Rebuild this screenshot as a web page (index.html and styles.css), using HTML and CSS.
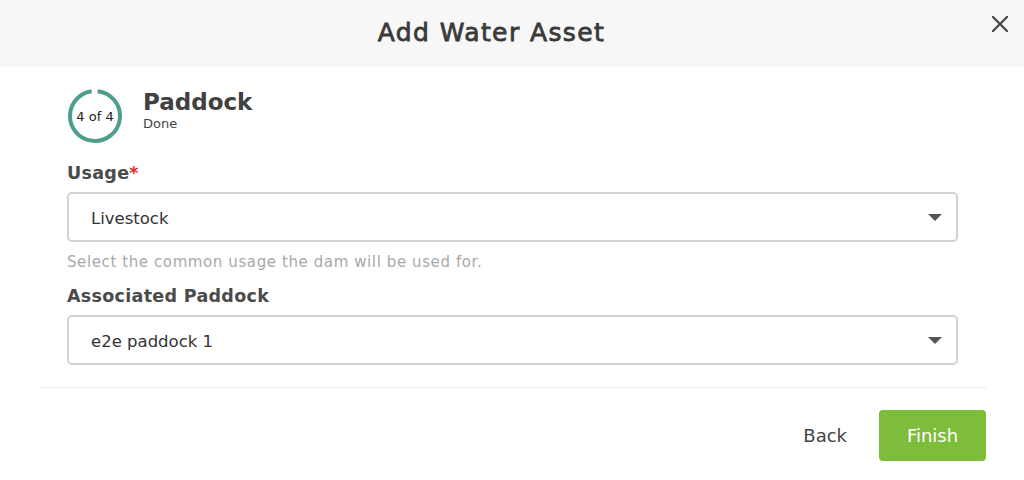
FILE: index.html
```html
<!DOCTYPE html>
<html lang="en">
<head>
    <meta charset="UTF-8">
    <title>Add Water Asset</title>
    <link rel="stylesheet" href="styles.css">
</head>
<body>
    <div class="modal">
        <div class="modal-header">
            <h1>Add Water Asset</h1>
            <button class="close-btn" aria-label="Close">
                <svg width="18" height="18" viewBox="0 0 18 18"><path d="M2 2 L16 16 M16 2 L2 16" stroke="#444" stroke-width="2.2" stroke-linecap="round"/></svg>
            </button>
        </div>

        <div class="modal-body">
            <div class="step">
                <div class="step-ring">
                    <svg width="56" height="56" viewBox="0 0 56 56">
                        <circle cx="28" cy="28" r="25" fill="none" stroke="#4e9d8d" stroke-width="4" stroke-dasharray="150 7.08" transform="rotate(-84 28 28)"/>
                    </svg>
                    <span>4 of 4</span>
                </div>
                <div class="step-text">
                    <div class="step-title">Paddock</div>
                    <div class="step-sub">Done</div>
                </div>
            </div>

            <label class="field-label">Usage<span class="req">*</span></label>
            <div class="select">
                <span>Livestock</span>
                <span class="caret"></span>
            </div>
            <div class="hint">Select the common usage the dam will be used for.</div>

            <label class="field-label">Associated Paddock</label>
            <div class="select">
                <span>e2e paddock 1</span>
                <span class="caret"></span>
            </div>
        </div>

        <div class="modal-footer">
            <button class="btn-back">Back</button>
            <button class="btn-finish">Finish</button>
        </div>
    </div>
</body>
</html>
```

FILE: styles.css
```css
* {
    margin: 0;
    padding: 0;
    box-sizing: border-box;
}

body {
    background: #fff;
    font-family: 'DejaVu Sans', 'Open Sans', sans-serif;
    color: #333;
    width: 1024px;
    height: 480px;
    overflow: hidden;
}

.modal-header {
    height: 67px;
    background: #f7f7f7;
    display: flex;
    align-items: center;
    justify-content: center;
    padding-right: 41px;
    position: relative;
}

.modal-header h1 {
    font-size: 25px;
    font-weight: normal;
    -webkit-text-stroke: 0.8px #3a3a3a;
    letter-spacing: 1.4px;
    color: #3a3a3a;
    margin-top: -2px;
}

.close-btn {
    position: absolute;
    right: 14px;
    top: 14px;
    border: none;
    background: none;
    width: 20px;
    height: 20px;
    display: flex;
    align-items: center;
    justify-content: center;
}

.modal-body {
    padding: 21px 66px 0 67px;
}

.step {
    display: flex;
    align-items: center;
    gap: 20px;
}

.step-ring {
    width: 56px;
    height: 56px;
    position: relative;
    display: flex;
    align-items: center;
    justify-content: center;
}

.step-ring svg {
    position: absolute;
    left: 0;
    top: 0;
}

.step-ring span {
    font-size: 13px;
    color: #222;
}

.step-text {
    margin-top: -12px;
}

.step-title {
    font-size: 23px;
    font-weight: 600;
    color: #404040;
    line-height: 27px;
}

.step-sub {
    font-size: 13px;
    color: #444;
    line-height: 16px;
}

.field-label {
    display: block;
    font-size: 17.5px;
    font-weight: 600;
    color: #4a4a4a;
    margin-top: 18px;
    margin-bottom: 8px;
    line-height: 22px;
    letter-spacing: 0.3px;
}

.req {
    color: #e0301e;
}

.select {
    height: 50px;
    border: 2px solid #d3d3d3;
    border-radius: 5px;
    display: flex;
    align-items: center;
    justify-content: space-between;
    padding: 0 14px 0 22px;
    font-size: 16.5px;
    color: #333;
}

.select span:first-child {
    margin-top: 2px;
}

.caret {
    width: 0;
    height: 0;
    border-left: 7px solid transparent;
    border-right: 7px solid transparent;
    border-top: 7px solid #555;
}

.hint {
    font-size: 15px;
    color: #a9a9a9;
    margin-top: 10px;
    line-height: 20px;
    letter-spacing: 0.6px;
}

.hint + .field-label {
    margin-top: 13px;
}

.modal-footer {
    margin: 22px 38px 0 40px;
    border-top: 1px solid #ebebeb;
    padding-top: 22px;
    display: flex;
    justify-content: flex-end;
    align-items: center;
    gap: 32px;
}

.btn-back {
    border: none;
    background: none;
    font-family: inherit;
    font-size: 18px;
    color: #444;
}

.btn-finish {
    border: none;
    background: #7dbd3b;
    color: #fff;
    font-family: inherit;
    font-size: 18px;
    width: 107px;
    height: 51px;
    border-radius: 4px;
}
```
